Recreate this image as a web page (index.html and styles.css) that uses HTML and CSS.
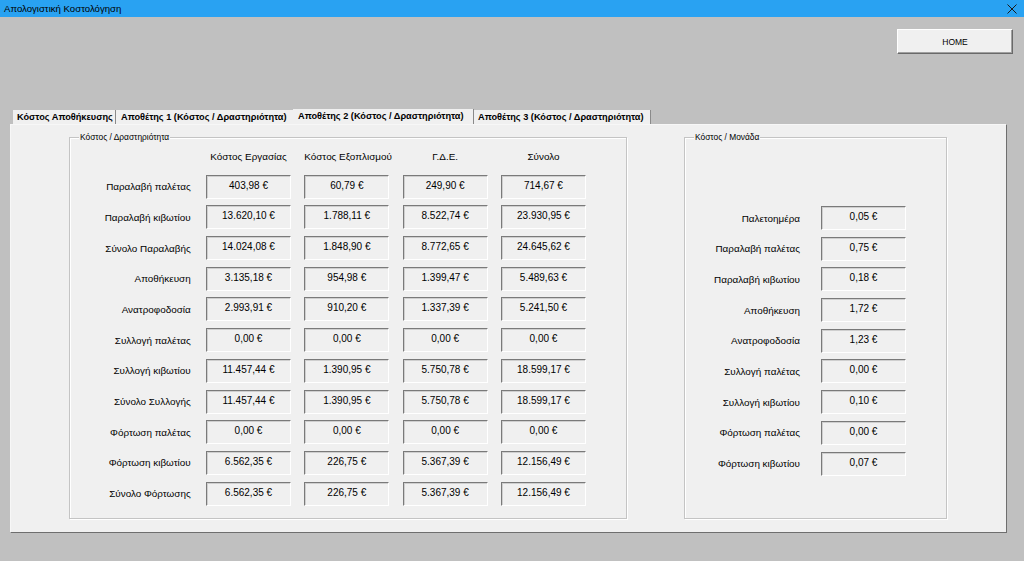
FILE: index.html
```html
<!DOCTYPE html>
<html lang="el">
<head>
<meta charset="utf-8">
<title>Απολογιστική Κοστολόγηση</title>
<link rel="stylesheet" href="styles.css">
</head>
<body>
<div class="titlebar">
  <span class="title">Απολογιστική Κοστολόγηση</span>
  <svg class="close" width="10" height="10" viewBox="0 0 10 10"><path d="M0.5 0.5 L9.5 9.5 M9.5 0.5 L0.5 9.5" stroke="#1a1a1a" stroke-width="1" fill="none"/></svg>
</div>
<div class="toolbar">
  <div class="home">HOME</div>
</div>
<div class="tabs">
  <div class="tab t1 sep">Κόστος Αποθήκευσης</div>
  <div class="tab t2">Αποθέτης 1 (Κόστος / Δραστηριότητα)</div>
  <div class="tab t3 active sep">Αποθέτης 2 (Κόστος / Δραστηριότητα)</div>
  <div class="tab t4 sep">Αποθέτης 3 (Κόστος / Δραστηριότητα)</div>
</div>
<div class="page">
  <div class="group group-left">
    <span class="legend">Κόστος / Δραστηριότητα</span>
    <div class="grid grid-left">
      <div></div>
      <div class="head">Κόστος Εργασίας</div>
      <div class="head">Κόστος Εξοπλισμού</div>
      <div class="head">Γ.Δ.Ε.</div>
      <div class="head">Σύνολο</div>

      <div class="lbl">Παραλαβή παλέτας</div>
      <div class="val">403,98 €</div><div class="val">60,79 €</div><div class="val">249,90 €</div><div class="val">714,67 €</div>

      <div class="lbl">Παραλαβή κιβωτίου</div>
      <div class="val">13.620,10 €</div><div class="val">1.788,11 €</div><div class="val">8.522,74 €</div><div class="val">23.930,95 €</div>

      <div class="lbl">Σύνολο Παραλαβής</div>
      <div class="val">14.024,08 €</div><div class="val">1.848,90 €</div><div class="val">8.772,65 €</div><div class="val">24.645,62 €</div>

      <div class="lbl">Αποθήκευση</div>
      <div class="val">3.135,18 €</div><div class="val">954,98 €</div><div class="val">1.399,47 €</div><div class="val">5.489,63 €</div>

      <div class="lbl">Ανατροφοδοσία</div>
      <div class="val">2.993,91 €</div><div class="val">910,20 €</div><div class="val">1.337,39 €</div><div class="val">5.241,50 €</div>

      <div class="lbl">Συλλογή παλέτας</div>
      <div class="val">0,00 €</div><div class="val">0,00 €</div><div class="val">0,00 €</div><div class="val">0,00 €</div>

      <div class="lbl">Συλλογή κιβωτίου</div>
      <div class="val">11.457,44 €</div><div class="val">1.390,95 €</div><div class="val">5.750,78 €</div><div class="val">18.599,17 €</div>

      <div class="lbl">Σύνολο Συλλογής</div>
      <div class="val">11.457,44 €</div><div class="val">1.390,95 €</div><div class="val">5.750,78 €</div><div class="val">18.599,17 €</div>

      <div class="lbl">Φόρτωση παλέτας</div>
      <div class="val">0,00 €</div><div class="val">0,00 €</div><div class="val">0,00 €</div><div class="val">0,00 €</div>

      <div class="lbl">Φόρτωση κιβωτίου</div>
      <div class="val">6.562,35 €</div><div class="val">226,75 €</div><div class="val">5.367,39 €</div><div class="val">12.156,49 €</div>

      <div class="lbl">Σύνολο Φόρτωσης</div>
      <div class="val">6.562,35 €</div><div class="val">226,75 €</div><div class="val">5.367,39 €</div><div class="val">12.156,49 €</div>
    </div>
  </div>
  <div class="group group-right">
    <span class="legend">Κόστος / Μονάδα</span>
    <div class="grid grid-right">
      <div class="lbl">Παλετοημέρα</div><div class="val">0,05 €</div>
      <div class="lbl">Παραλαβή παλέτας</div><div class="val">0,75 €</div>
      <div class="lbl">Παραλαβή κιβωτίου</div><div class="val">0,18 €</div>
      <div class="lbl">Αποθήκευση</div><div class="val">1,72 €</div>
      <div class="lbl">Ανατροφοδοσία</div><div class="val">1,23 €</div>
      <div class="lbl">Συλλογή παλέτας</div><div class="val">0,00 €</div>
      <div class="lbl">Συλλογή κιβωτίου</div><div class="val">0,10 €</div>
      <div class="lbl">Φόρτωση παλέτας</div><div class="val">0,00 €</div>
      <div class="lbl">Φόρτωση κιβωτίου</div><div class="val">0,07 €</div>
    </div>
  </div>
</div>
</body>
</html>
```

FILE: styles.css
```css
html, body {
  margin: 0;
  padding: 0;
}
body {
  width: 1024px;
  height: 561px;
  overflow: hidden;
  background: #c0c0c0;
  color: #000;
  font-family: "Liberation Sans", Arial, sans-serif;
  font-size: 9.9px;
}
.titlebar {
  height: 17px;
  background: #29a2f2;
  display: flex;
  align-items: center;
  justify-content: space-between;
  padding: 0 7px 0 4px;
}
.title {
  font-size: 9.6px;
  line-height: 17px;
}
.close {
  display: block;
}
.toolbar {
  display: flex;
  justify-content: flex-end;
  padding: 12px 11px 0 0;
}
.home {
  width: 116px;
  height: 25px;
  box-sizing: border-box;
  background: #f0f0f0;
  border: 1px solid;
  border-color: #ffffff #696969 #696969 #ffffff;
  box-shadow: inset -1px -1px 0 #a0a0a0;
  font-size: 8.5px;
  display: flex;
  align-items: center;
  justify-content: center;
}
.tabs {
  margin: 55px 0 0 13px;
  height: 15px;
  display: flex;
  align-items: flex-end;
}
.tab {
  box-sizing: border-box;
  height: 14px;
  line-height: 14px;
  background: #f0f0f0;
  font-weight: bold;
  font-size: 9.2px;
  padding-left: 5px;
  white-space: nowrap;
}
.tab.sep {
  border-right: 1px solid #8a8a8a;
}
.tab.active {
  height: 15px;
  line-height: 15px;
}
.t1 { width: 103px; padding-left: 4px; }
.t2 { width: 177px; }
.t3 { width: 181px; }
.t4 { width: 177px; padding-left: 4px; }
.page {
  margin-left: 10px;
  width: 997px;
  height: 409px;
  box-sizing: border-box;
  background: #f0f0f0;
  border: 1px solid;
  border-color: #f7f7f7 #6e6e6e #6e6e6e #f7f7f7;
  display: flex;
  gap: 57px;
  padding: 12px 0 0 58px;
}
.group {
  position: relative;
  box-sizing: border-box;
  height: 382px;
  border: 1px solid #c4c4c4;
  box-shadow: inset 1px 1px 0 #ffffff, 1px 1px 0 #ffffff;
}
.group-left { width: 558px; }
.group-right { width: 263px; }
.legend {
  position: absolute;
  top: -6px;
  left: 9px;
  padding: 0 1px;
  background: #f0f0f0;
  font-size: 8.4px;
  line-height: 11px;
}
.grid {
  display: grid;
  row-gap: 6.7px;
}
.grid-left {
  padding: 12px 0 0 12.67px;
  grid-template-columns: 110px repeat(4, 85px);
  grid-template-rows: 18px repeat(11, 24px);
  column-gap: 13.33px;
}
.grid-right {
  padding: 68px 0 0 7px;
  grid-template-columns: 110px 85px;
  grid-auto-rows: 24px;
  column-gap: 19px;
}
.head {
  align-self: start;
  text-align: center;
  line-height: 14px;
  white-space: nowrap;
}
.lbl {
  align-self: center;
  text-align: right;
  padding-right: 2px;
  white-space: nowrap;
  line-height: 14px;
  padding-top: 1px;
}
.val {
  box-sizing: border-box;
  border: 1px solid;
  border-color: #7a7a7a #ffffff #ffffff #7a7a7a;
  box-shadow: inset 1px 1px 0 #cfcfcf;
  padding-top: 3px;
  line-height: 13px;
  text-align: center;
  white-space: nowrap;
  font-size: 10px;
}
```
